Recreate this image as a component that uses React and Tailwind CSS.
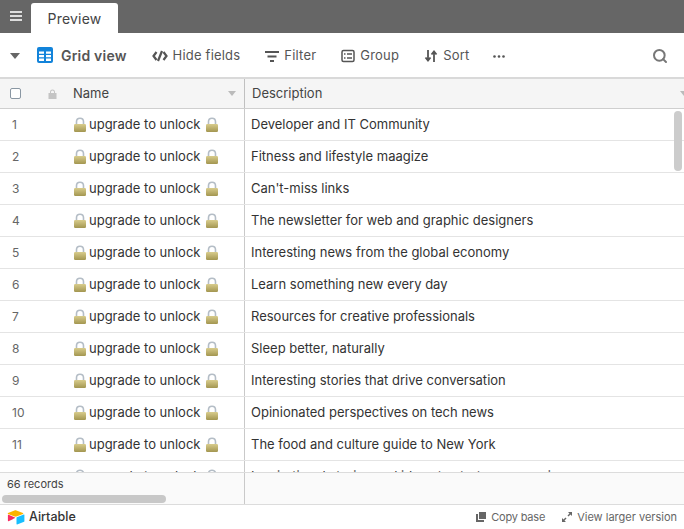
import React from 'react';
import { Search } from 'lucide-react';

const descriptions = [
  'Developer and IT Community',
  'Fitness and lifestyle maagize',
  "Can't-miss links",
  'The newsletter for web and graphic designers',
  'Interesting news from the global economy',
  'Learn something new every day',
  'Resources for creative professionals',
  'Sleep better, naturally',
  'Interesting stories that drive conversation',
  'Opinionated perspectives on tech news',
  'The food and culture guide to New York',
  'Inspirational stories and ideas to start your morning',
];

const Lock = () => (
  <svg width="14" height="16" viewBox="0 0 14 16" className="flex-shrink-0">
    <defs>
      <linearGradient id="lockBody" x1="0" y1="0" x2="0" y2="1">
        <stop offset="0" stopColor="#d8cc8c" />
        <stop offset="1" stopColor="#a39650" />
      </linearGradient>
    </defs>
    <path d="M3.500 8V4.800C3.500 2.800 5 1.300 7 1.300s3.500 1.500 3.500 3.500V8" fill="none" stroke="#b4bdc6" strokeWidth="1.600" />
    <rect x="1" y="7" width="12" height="8" rx="1.200" fill="url(#lockBody)" />
  </svg>
);

const ToolbarItem = ({ icon, label }) => (
  <div className="flex items-center gap-[5px] text-[13px] tracking-[0.2px] text-[#555]">
    {icon}
    <span>{label}</span>
  </div>
);

const Row = ({ index, text }) => (
  <div className="flex h-8 flex-shrink-0 border-b border-[#e4e4e4] text-[13px] text-[#333]">
    <div className="flex w-[245px] items-center border-r border-[#c9c9c9]">
      <span className="w-[73px] pl-3 text-[12px] text-[#666]">{index}</span>
      <Lock />
      <span className="ml-[2px]">upgrade to unlock</span>
      <span className="ml-[5px] flex"><Lock /></span>
    </div>
    <div className="flex flex-1 items-center pl-[6px]">{text}</div>
  </div>
);

export default function App() {
  return (
    <div className="flex h-[529px] w-[684px] flex-col overflow-hidden bg-white font-['Inter',sans-serif]">
      <div className="flex h-[33px] flex-shrink-0 items-end bg-[#666666]">
        <div className="flex h-[33px] w-[31px] flex-col items-center justify-center gap-[2px] pb-[1px]">
          <span className="h-[2px] w-3 bg-[#ddd]" />
          <span className="h-[2px] w-3 bg-[#ddd]" />
          <span className="h-[2px] w-3 bg-[#ddd]" />
        </div>
        <div className="flex h-[30px] w-[87px] items-center justify-center rounded-t-[3px] bg-white text-[14px] tracking-[0.2px] text-[#444]">
          Preview
        </div>
      </div>

      <div className="flex h-[44px] flex-shrink-0 items-center pl-[10px] pr-4 pt-[2px]">
        <svg width="10" height="6" viewBox="0 0 10 6" className="mr-[17px]"><path d="M0 0h10L5 6z" fill="#666" /></svg>
        <svg width="16" height="16" viewBox="0 0 16 16" className="mr-2 -mt-[2px]">
          <rect width="16" height="16" rx="2" fill="#1283da" />
          <path d="M2 4.500h5v2.200H2zM9 4.500h5v2.200H9zM2 8h5v2.200H2zM9 8h5v2.200H9zM2 11.500h5V14H2zM9 11.500h5V14H9z" fill="#fff" />
        </svg>
        <span className="mr-[25px] -mt-[2px] text-[14px] font-semibold tracking-[0.2px] text-[#555]">Grid view</span>
        <div className="flex items-center gap-[25px]">
          <ToolbarItem
            label="Hide fields"
            icon={
              <svg width="16" height="12" viewBox="0 0 16 12" fill="none" stroke="#555" strokeWidth="2.200">
                <path d="M4.500 2 1.500 6l3 4M11.500 2l3 4-3 4M10 1 6 11" />
              </svg>
            }
          />
          <ToolbarItem
            label="Filter"
            icon={
              <svg width="14" height="11" viewBox="0 0 14 11" fill="#555">
                <path d="M0 0h14v2H0zM2.500 4.500h9v2h-9zM5 9h4v2H5z" />
              </svg>
            }
          />
          <ToolbarItem
            label="Group"
            icon={
              <svg width="14" height="14" viewBox="0 0 14 14" fill="none" stroke="#555" strokeWidth="1.500">
                <rect x="1" y="1.500" width="12" height="11" rx="1.500" />
                <path d="M3 5h1.500M6 5h5M3 9h1.500M6 9h5" />
              </svg>
            }
          />
          <ToolbarItem
            label="Sort"
            icon={
              <svg width="14" height="12" viewBox="0 0 14 12" fill="none" stroke="#555" strokeWidth="1.800">
                <path d="M4 0v10M1.500 7.500 4 10.500l2.500-3M10 12V2M7.500 4.500 10 1.500l2.500 3" />
              </svg>
            }
          />
          <svg width="12" height="3" viewBox="0 0 12 3" fill="#555" className="-ml-px">
            <circle cx="1.500" cy="1.500" r="1.300" /><circle cx="6" cy="1.500" r="1.300" /><circle cx="10.500" cy="1.500" r="1.300" />
          </svg>
        </div>
        <Search className="ml-auto -mt-[1px] text-[#777]" size={16} strokeWidth={3} />
      </div>

      <div className="relative flex min-h-0 flex-1 flex-col">
        <div className="flex h-[32px] flex-shrink-0 border-y border-t-2 border-[#d9d9d9] border-b-[#cfcfcf] bg-[#f5f5f5] text-[13px] text-[#444]">
          <div className="flex w-[245px] items-center border-r border-[#c0c0c0]">
            <span className="ml-[10px] h-[11px] w-[11px] rounded-[2px] border border-[#8a97a3] bg-white" />
            <svg width="9" height="10" viewBox="0 0 9 10" className="ml-[27px]" fill="#c4c4c4">
              <path d="M2 4V3a2.500 2.500 0 0 1 5 0v1h1.500v6h-8V4zm1 0h3V3a1.500 1.500 0 0 0-3 0z" />
            </svg>
            <span className="ml-4">Name</span>
            <svg width="8" height="5" viewBox="0 0 8 5" className="ml-auto mr-[8px]"><path d="M0 0h8L4 5z" fill="#bbb" /></svg>
          </div>
          <div className="flex flex-1 items-center pl-[7px]">
            Description
            <svg width="8" height="5" viewBox="0 0 8 5" className="ml-auto -mr-[4px]"><path d="M0 0h8L4 5z" fill="#bbb" /></svg>
          </div>
        </div>
        <div className="flex min-h-0 flex-1 flex-col overflow-hidden">
          {descriptions.map((text, i) => (
            <Row key={i} index={i + 1} text={text} />
          ))}
        </div>
        <div className="absolute right-[2px] top-[34px] h-[60px] w-2 rounded-full bg-[#cccccc]" />
        <div className="flex h-[33px] flex-shrink-0 border-y border-[#dcdcdc] bg-[#fafafa] text-[11px] text-[#444]">
          <div className="w-[245px] border-r border-[#c9c9c9] pl-[7px] pt-[3px]">66 records</div>
        </div>
        <div className="absolute bottom-[2px] left-[2px] h-2 w-[164px] rounded-full bg-[#c8c8c8]" />
      </div>

      <div className="flex h-[24px] flex-shrink-0 items-center px-[7px] text-[11px] text-[#666]">
        <svg width="18" height="15" viewBox="0 0 18 15" className="mr-[4px]">
          <path d="M7.500.4 1 3c-.4.200-.4.700 0 .900l6.600 2.600c.6.200 1.200.200 1.800 0L16 3.900c.4-.200.4-.700 0-.900L9.400.4c-.6-.2-1.300-.2-1.900 0z" fill="#fcb400" />
          <path d="M9.500 7.800v6.300c0 .3.300.5.600.4l7-2.700c.2-.1.300-.3.300-.5V5c0-.3-.3-.5-.6-.4l-7 2.700c-.2.100-.3.300-.3.500z" fill="#18bfff" />
          <path d="M8 8.100 6 9.100l-.2.100-4.300 2c-.3.100-.6-.1-.6-.4V5.200c0-.1.100-.2.100-.3l.2-.1c.1-.1.300-.1.400 0L8 7.500c.3.100.3.500 0 .6z" fill="#f82b60" />
        </svg>
        <span className="text-[12.500px] font-medium text-[#333]">Airtable</span>
        <div className="ml-auto flex items-center gap-[17px]">
          <div className="flex items-center gap-[5px] tracking-[-0.2px]">
            <svg width="10" height="10" viewBox="0 0 10 10" fill="#666"><path d="M3 0h7v7H3zM0 2h2v6h6v2H0z" /></svg>
            Copy base
          </div>
          <div className="flex items-center gap-[5px]">
            <svg width="10" height="10" viewBox="0 0 10 10" fill="#666"><path d="M6 0h4v4L8.500 2.500 6.500 4.500 5.500 3.500 7.500 1.500zM0 10V6l1.500 1.500 2-2 1 1-2 2L4 10z" /></svg>
            View larger version
          </div>
        </div>
      </div>
    </div>
  );
}
